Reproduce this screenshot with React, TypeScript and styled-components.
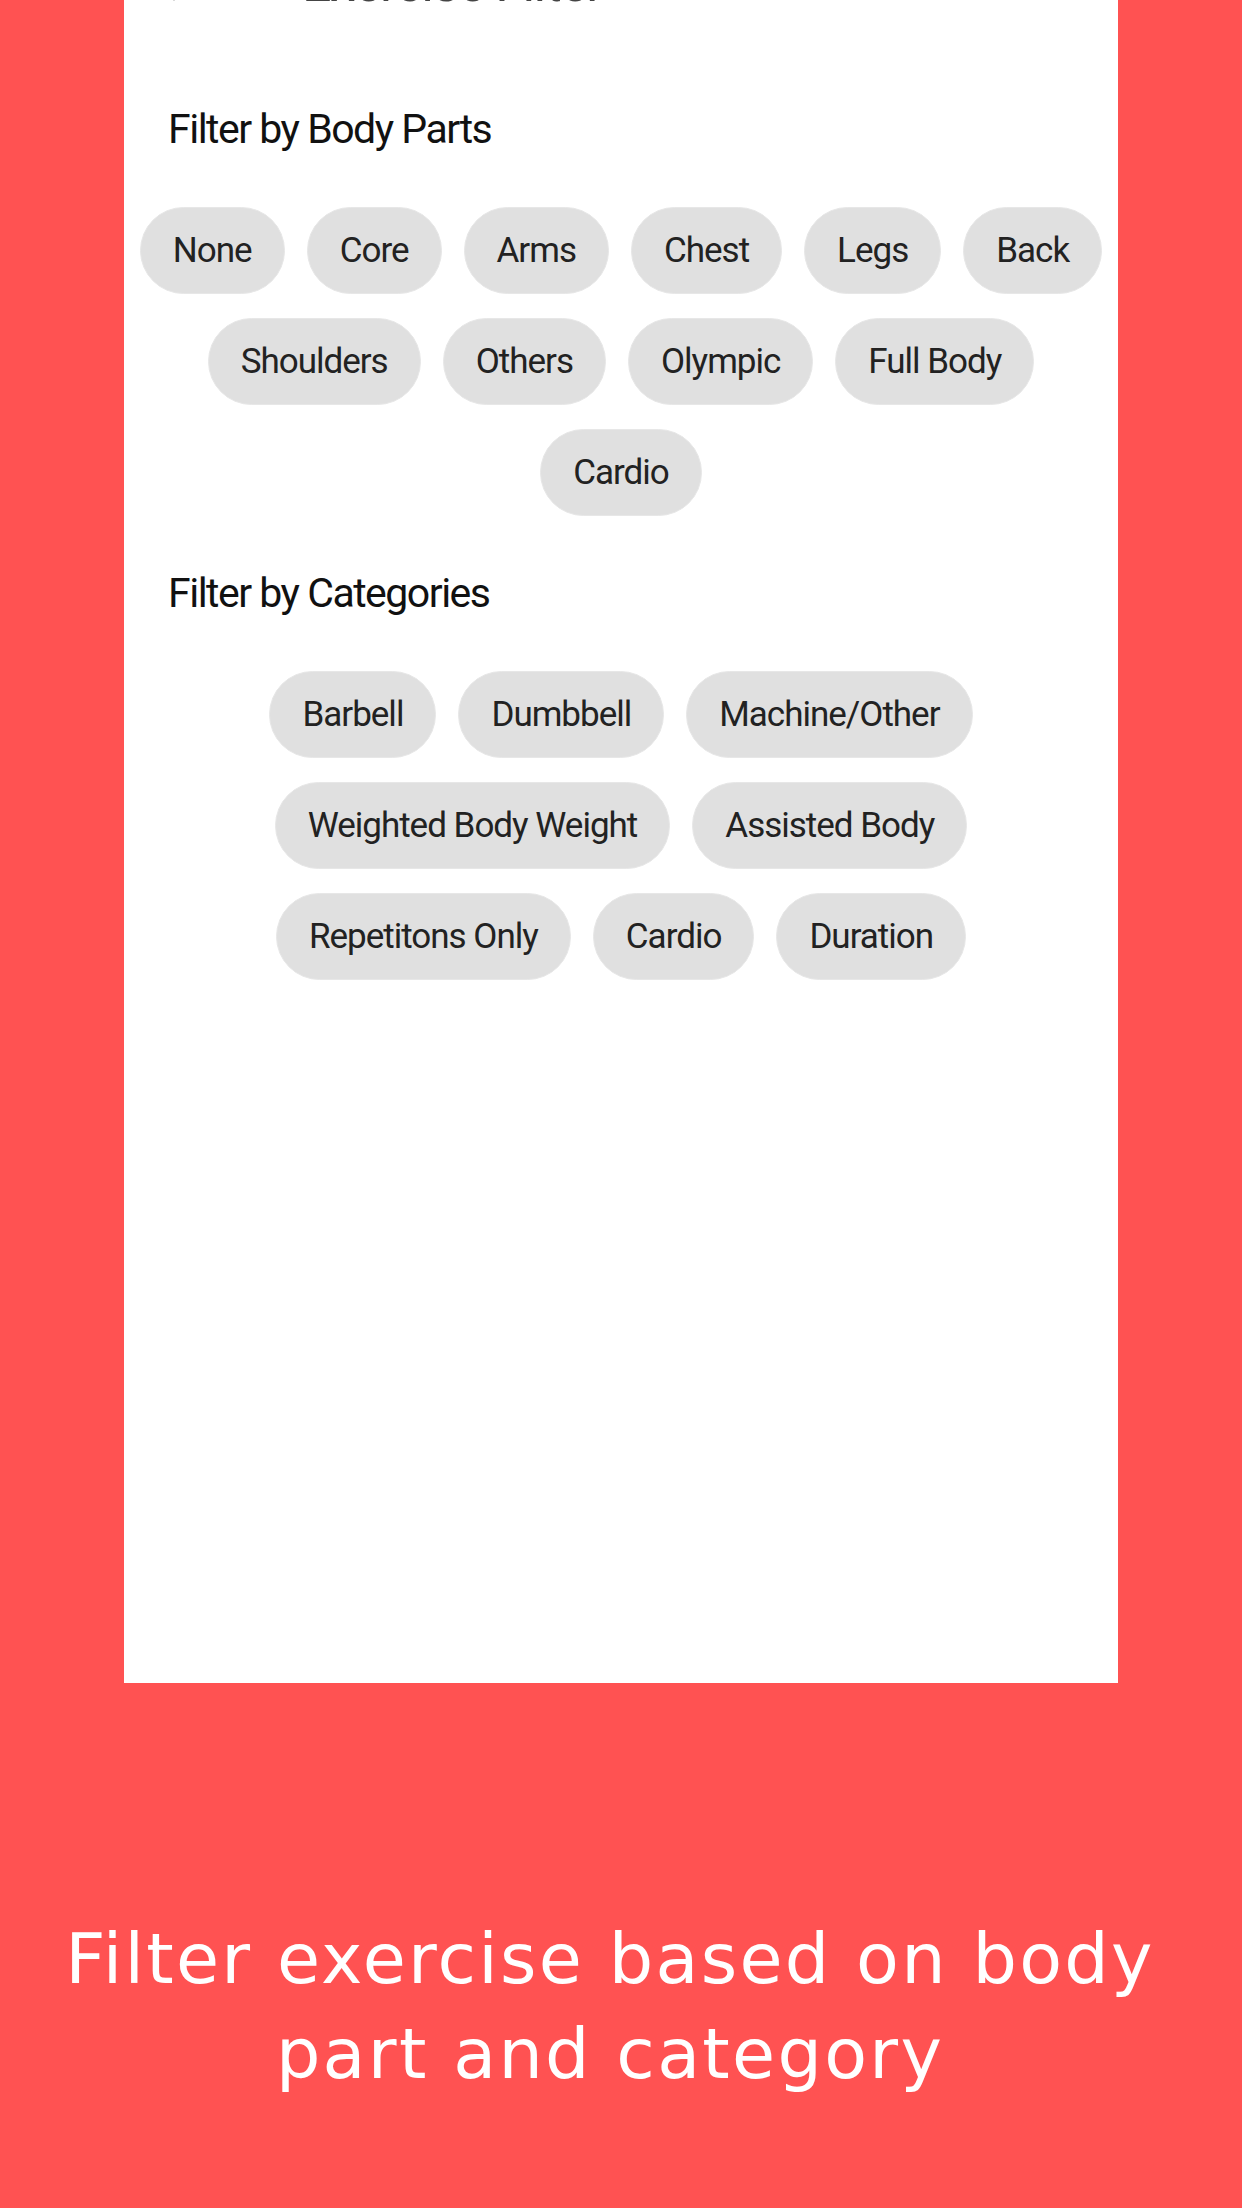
import React from "react";
import styled, { createGlobalStyle } from "styled-components";
import { ArrowLeft } from "lucide-react";

const GlobalStyle = createGlobalStyle`
  html, body {
    margin: 0;
    padding: 0;
    background: #ff5252;
  }
  body {
    font-family: Roboto, "Liberation Sans", sans-serif;
  }
`;

const Page = styled.div`
  width: 1242px;
  height: 2208px;
  overflow: hidden;
  background: #ff5252;
  display: flex;
  flex-direction: column;
  align-items: center;
`;

const Panel = styled.div`
  width: 994px;
  height: 1683px;
  background: #ffffff;
  display: flex;
  flex-direction: column;
  box-sizing: border-box;
`;

const Header = styled.div`
  height: 56px;
  margin-top: -44px;
  display: flex;
  align-items: center;
  padding-left: 26px;
  color: #444444;
`;

const Title = styled.span`
  margin-left: 104px;
  font-size: 52px;
  line-height: 56px;
  letter-spacing: -1.5px;
  color: #444444;
  white-space: nowrap;
`;

const SectionTitle = styled.h2<{ $top: number }>`
  margin: ${(p) => p.$top}px 0 0 44px;
  font-weight: 400;
  font-size: 41px;
  line-height: 52px;
  letter-spacing: -1.5px;
  color: #111111;
`;

const ChipWrap = styled.div`
  margin-top: 52px;
  display: flex;
  flex-wrap: wrap;
  justify-content: center;
  column-gap: 22px;
  row-gap: 24px;
`;

const Chip = styled.button`
  height: 87px;
  box-sizing: border-box;
  padding: 0 32px;
  border-radius: 44px;
  border: 1px solid #e7e7e7;
  background: #e0e0e0;
  color: #222222;
  font-family: inherit;
  font-size: 35px;
  letter-spacing: -1px;
  line-height: 1;
  display: flex;
  align-items: center;
  justify-content: center;
  white-space: nowrap;
  cursor: pointer;
`;

const Caption = styled.p`
  margin: 229px 0 0;
  width: 1242px;
  box-sizing: border-box;
  padding-right: 22px;
  text-align: center;
  color: #ffffff;
  font-family: "DejaVu Sans", sans-serif;
  font-size: 70px;
  line-height: 95px;
  letter-spacing: 2.3px;
`;

const bodyParts = [
  "None",
  "Core",
  "Arms",
  "Chest",
  "Legs",
  "Back",
  "Shoulders",
  "Others",
  "Olympic",
  "Full Body",
  "Cardio",
];

const categories = [
  "Barbell",
  "Dumbbell",
  "Machine/Other",
  "Weighted Body Weight",
  "Assisted Body",
  "Repetitons Only",
  "Cardio",
  "Duration",
];

export default function App() {
  return (
    <>
      <GlobalStyle />
      <Page>
        <Panel>
          <Header>
            <ArrowLeft size={48} strokeWidth={2.2} />
            <Title>Exercise Filter</Title>
          </Header>
          <SectionTitle $top={91}>Filter by Body Parts</SectionTitle>
          <ChipWrap>
            {bodyParts.map((b) => (
              <Chip key={b}>{b}</Chip>
            ))}
          </ChipWrap>
          <SectionTitle $top={51}>Filter by Categories</SectionTitle>
          <ChipWrap>
            {categories.map((c) => (
              <Chip key={c}>{c}</Chip>
            ))}
          </ChipWrap>
        </Panel>
        <Caption>
          Filter exercise based on body
          <br />
          part and category
        </Caption>
      </Page>
    </>
  );
}
